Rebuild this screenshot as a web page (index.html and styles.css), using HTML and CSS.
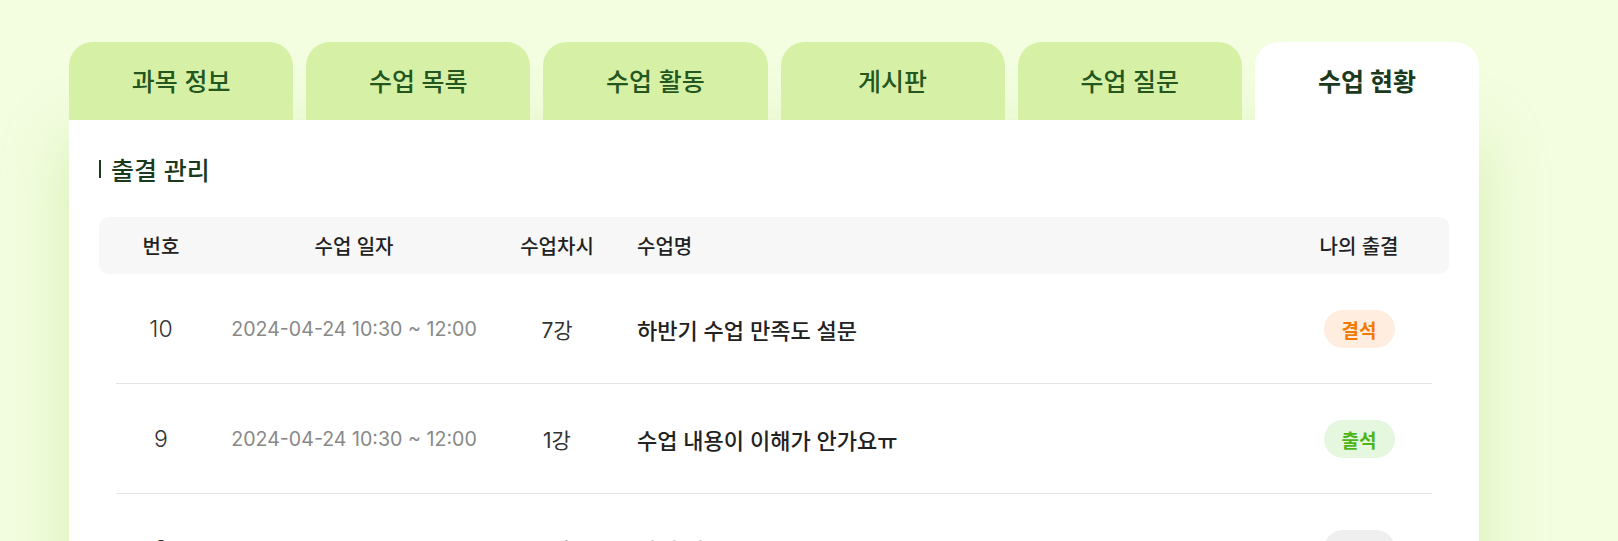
FILE: index.html
```html
<!DOCTYPE html>
<html>
<head>
    <title>수업 현황</title>
    <link rel="stylesheet" href="styles.css">
</head>
<body>
    <div class="board">
        <div class="tabs">
            <div class="tab">과목 정보</div>
            <div class="tab">수업 목록</div>
            <div class="tab">수업 활동</div>
            <div class="tab">게시판</div>
            <div class="tab">수업 질문</div>
            <div class="tab active">수업 현황</div>
        </div>

        <div class="panel">
            <h2 class="section-title">출결 관리</h2>

            <div class="table">
                <div class="thead">
                    <div class="c-num">번호</div>
                    <div class="c-date">수업 일자</div>
                    <div class="c-round">수업차시</div>
                    <div class="c-title">수업명</div>
                    <div class="c-state">나의 출결</div>
                </div>

                <div class="row">
                    <div class="c-num">10</div>
                    <div class="c-date">2024-04-24 10:30 ~ 12:00</div>
                    <div class="c-round">7강</div>
                    <div class="c-title">하반기 수업 만족도 설문</div>
                    <div class="c-state"><span class="badge absent">결석</span></div>
                </div>
                <div class="row">
                    <div class="c-num">9</div>
                    <div class="c-date">2024-04-24 10:30 ~ 12:00</div>
                    <div class="c-round">1강</div>
                    <div class="c-title">수업 내용이 이해가 안가요ㅠ</div>
                    <div class="c-state"><span class="badge present">출석</span></div>
                </div>
                <div class="row">
                    <div class="c-num">8</div>
                    <div class="c-date">2024-04-24 10:30 ~ 12:00</div>
                    <div class="c-round">1강</div>
                    <div class="c-title">과제 제목</div>
                    <div class="c-state"><span class="badge none">미정</span></div>
                </div>
            </div>
        </div>
    </div>
</body>
</html>
```

FILE: styles.css
```css
html, body {
    height: 100%;
    overflow: hidden;
}
body {
    margin: 0;
    background-color: #f3fde0;
    font-family: Inter, "Noto Sans CJK KR", sans-serif;
    color: #222;
}
.board {
    width: 1410px;
    margin: 42px 0 0 69px;
}

/* tabs */
.tabs {
    display: flex;
    gap: 13px;
}
.tab {
    flex: 1;
    height: 78px;
    display: flex;
    align-items: center;
    justify-content: center;
    padding-bottom: 2px;
    box-sizing: border-box;
    background-color: #d6f1a5;
    border-radius: 24px 24px 0 0;
    font-size: 25px;
    font-weight: 500;
    color: #24561f;
}
.tab.active {
    background-color: #fff;
    font-weight: 700;
    color: #1b3a1d;
}

/* panel */
.panel {
    background-color: #fff;
    padding: 30px 30px 40px;
    box-shadow: 0 20px 60px rgba(180, 225, 120, 0.45);
}
.section-title {
    margin: 0 0 29px;
    height: 38px;
    display: flex;
    align-items: center;
    gap: 10px;
    font-size: 25px;
    font-weight: 500;
    color: #1b3a1d;
}
.section-title::before {
    content: "";
    width: 2px;
    height: 18px;
    background-color: #1b3a1d;
}

/* table */
.thead, .row {
    display: grid;
    grid-template-columns: 124px 262px 144px 1fr 180px;
    align-items: center;
}
.thead {
    height: 57px;
    background-color: #f7f7f7;
    border-radius: 10px;
    font-size: 20px;
    font-weight: 500;
    color: #222;
}
.row {
    height: 110px;
    background: linear-gradient(#e4e4e4, #e4e4e4) no-repeat center bottom;
    background-size: calc(100% - 34px) 1px;
}
.c-num, .c-date, .c-round, .c-state {
    text-align: center;
}
.c-title {
    padding-left: 8px;
}
.row .c-num {
    font-size: 23px;
    font-weight: 300;
    color: #333;
}
.row .c-date {
    font-size: 19.6px;
    color: #888;
}
.row .c-round {
    font-size: 21px;
    color: #333;
}
.row .c-title {
    font-size: 22px;
    font-weight: 500;
    color: #222;
}
.badge {
    display: inline-flex;
    align-items: center;
    justify-content: center;
    width: 71px;
    height: 38px;
    border-radius: 19px;
    font-size: 19px;
    font-weight: 600;
}
.badge.absent {
    background-color: #ffeddf;
    color: #f27a00;
}
.badge.present {
    background-color: #e5f7df;
    color: #4db516;
}
.badge.none {
    background-color: #efefef;
    color: #333;
}
```
